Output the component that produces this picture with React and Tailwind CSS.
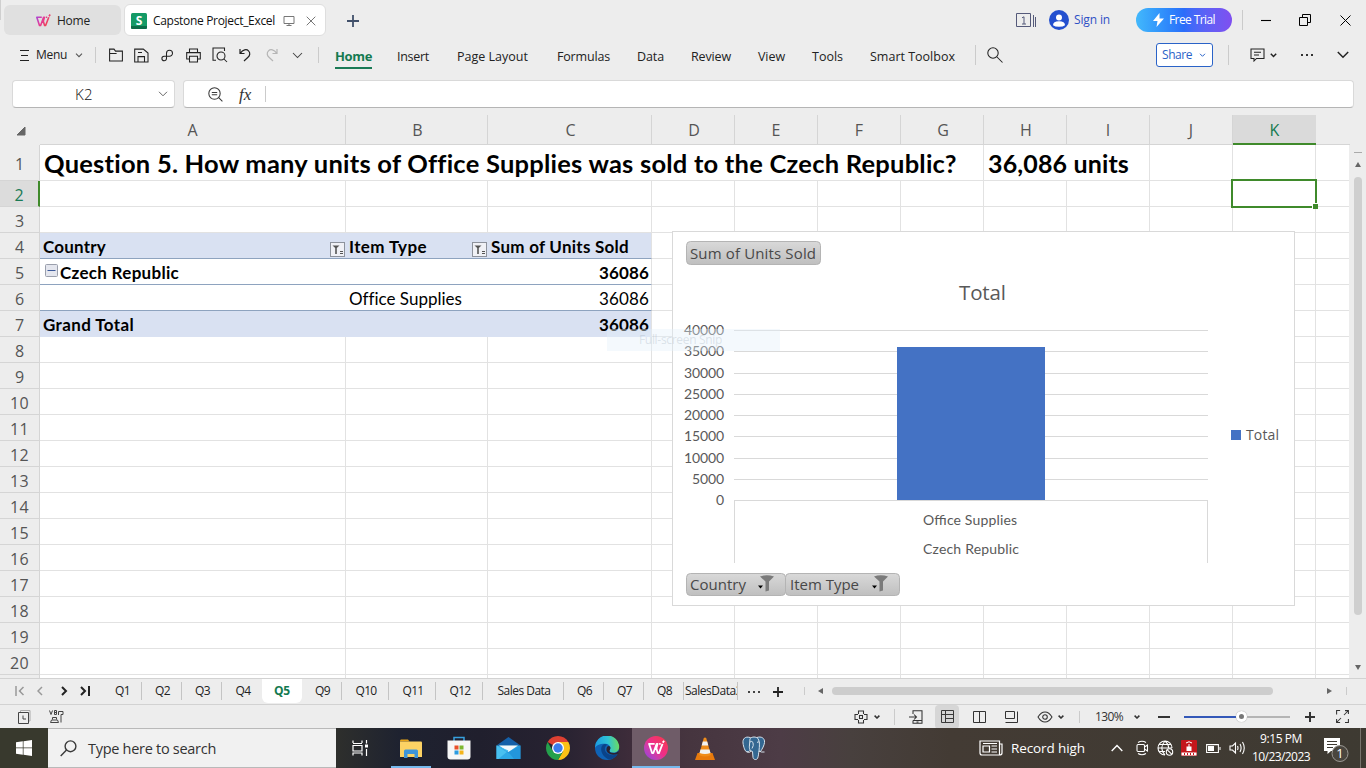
import { useLayoutEffect, useRef, useState } from "react";

/* Text that is tracked so that it takes exactly `w` pixels. */
function Fit({ w, className = "", children }) {
  const ref = useRef(null);
  const [spacing, setSpacing] = useState(0);
  useLayoutEffect(() => {
    const natural = ref.current.getBoundingClientRect().width;
    setSpacing((w - natural) / String(children).length);
  }, []);
  return (
    <span ref={ref} className={"inline-block shrink-0 whitespace-pre " + className} style={{ letterSpacing: spacing + "px" }}>
      {children}
    </span>
  );
}

function Icon({ w = 16, h = w, box, sw = 1.05, className = "text-[#3a3a3a]", children }) {
  return (
    <svg width={w} height={h} viewBox={box || `0 0 ${w} ${h}`} fill="none" stroke="currentColor" strokeWidth={sw} className={"shrink-0 " + className}>
      {children}
    </svg>
  );
}

const Sep = ({ className = "" }) => <div className={"w-px shrink-0 bg-[#cbcbcb] " + className} />;

function WpsMark({ size, gradient }) {
  return (
    <svg width={size} height={size} viewBox="0 0 16 16" fill="none" className="shrink-0">
      <defs>
        <linearGradient id="wps" x1="0" y1="0" x2="16" y2="10" gradientUnits="userSpaceOnUse">
          <stop offset="0" stopColor="#8a4df5" />
          <stop offset="0.5" stopColor="#e33a9a" />
          <stop offset="1" stopColor="#f2453a" />
        </linearGradient>
      </defs>
      <path
        d="M6.800 4.300H1.800L4.500 12.500H5.600L8.600 4.300H9.400L8.300 8.200 9.600 12.500H10.600L13.800 4.300M10.800 4.300H12.200M14 3.200 15.200 1.600"
        stroke={gradient ? "url(#wps)" : "#fff"}
        strokeWidth="1.600"
        strokeLinejoin="round"
      />
    </svg>
  );
}

function TitleBar() {
  return (
    <div className="flex h-10 shrink-0 items-center text-[12px]">
      <div className="h-5 w-px self-start bg-[#cfcfcf]" />
      <div className="ml-[3px] flex h-[30px] w-[117px] items-center rounded-md bg-[#e0e0e0] pt-px pl-[31px]">
        <WpsMark size={16} gradient />
        <Fit w={33} className="ml-[6px] text-[#222]">Home</Fit>
      </div>
      <div className="ml-[3px] flex h-[32px] w-[202px] items-center rounded-md border border-[#dedede] bg-white pt-[2px] pl-[6px]">
        <svg width="16" height="16" viewBox="0 0 16 16" className="shrink-0">
          <rect width="16" height="16" rx="1.5" fill="#149a66" />
          <path d="M0 14.5V13h16v1.5q0 1.5-1.500 1.500h-13Q0 16 0 14.500Z" fill="#0b6b48" />
          <text x="8" y="12" textAnchor="middle" fontSize="12" fontWeight="700" fill="#fff" fontFamily="Open Sans, sans-serif">S</text>
        </svg>
        <Fit w={122} className="ml-[6px] text-[#111]">Capstone Project_Excel</Fit>
        <Icon w={12} sw={1} className="ml-[8px] text-[#777]">
          <path d="M1 1.500h10v7H1zM6 8.500v2M3.500 10.500h5" />
        </Icon>
        <Icon w={10} sw={1} className="ml-[11px] text-[#777]">
          <path d="M.7.7l8.600 8.600M9.300.7.7 9.300" />
        </Icon>
      </div>
      <Icon w={12} sw={1.800} className="mt-[2px] ml-[21px] text-[#41506a]">
        <path d="M6 0v12M0 6h12" />
      </Icon>
      <Icon w={21} h={15} sw={1} className="ml-[657px] text-[#555a7a]">
        <path d="M.5.5h14v13H.5zM17.500 2v12M19.500 4v10" />
        <path d="M6 4.800l2-1V11M6 11h4" />
      </Icon>
      <svg width="20" height="20" viewBox="0 0 20 20" className="ml-[12px] shrink-0">
        <circle cx="10" cy="10" r="10" fill="#2450cf" />
        <circle cx="10" cy="7.500" r="3" fill="#fff" />
        <path d="M4 15.300q0-4 6-4t6 4q-2 1.500-6 1.500t-6-1.500Z" fill="#fff" />
      </svg>
      <Fit w={36} className="ml-[5px] text-[#2f50c5]">Sign in</Fit>
      <div className="ml-[26px] flex h-6 w-24 items-center rounded-full bg-linear-to-r from-[#43b8fb] via-[#2b6dfa] to-[#7f4ff0] pl-[17px]">
        <svg width="11" height="14" viewBox="0 0 11 14" className="shrink-0">
          <path d="M6.500 0 0 8h4.500L3.500 14 11 5.500H6.500Z" fill="#fff" />
        </svg>
        <Fit w={46} className="ml-[5px] text-white">Free Trial</Fit>
      </div>
      <Sep className="ml-[10px] h-5" />
      <Icon w={10} sw={1.100} className="ml-[18px]"><path d="M0 5.500h10" /></Icon>
      <Icon w={12} sw={1} className="ml-[28px]"><path d="M.5 3.500h8v8h-8zM3.500 3.500v-3h8v8h-3" /></Icon>
      <Icon w={11} sw={1} className="ml-[29px]"><path d="M.5.500l10 10M10.500.500l-10 10" /></Icon>
    </div>
  );
}

const menus = [
  ["Insert", 32, "ml-[25px]"],
  ["Page Layout", 71, "ml-[28px]"],
  ["Formulas", 53, "ml-[29px]"],
  ["Data", 27, "ml-[27px]"],
  ["Review", 40, "ml-[27px]"],
  ["View", 27, "ml-[27px]"],
  ["Tools", 31, "ml-[27px]"],
  ["Smart Toolbox", 85, "ml-[27px]"],
];

function MenuBar() {
  return (
    <div className="flex h-[30px] shrink-0 items-center text-[12px] text-[#222]">
      <Icon w={9} h={12} sw={1} className="ml-[20px]"><path d="M0 1.500h9M1 6.500h7M0 11.500h9" /></Icon>
      <Fit w={31} className="ml-[7px]">Menu</Fit>
      <Icon w={8} h={5} className="ml-[8px] text-[#555]"><path d="M1 .700l3 3 3-3" /></Icon>
      <Sep className="ml-[12px] h-4" />
      <Icon w={14} className="ml-[13px]"><path d="M.6 12.900V1.100h4.400l1.500 2h6.900v9.800zM.6 5.500h7" /></Icon>
      <Icon w={15} className="ml-[11px]"><path d="M4 13.900H.700V1.100h8.600l4.700 4v8.800H10.500M4 13.900V8.600h6.500v5.300H4M4 4.500h4" /></Icon>
      <Icon w={13} className="ml-[12px]"><path d="M5.500 4.200a3 3 0 1 1 3 3H3.200a2.300 2.300 0 1 0 2.300 2.300z" /></Icon>
      <Icon w={15} className="ml-[12px]"><path d="M3.500 4.500V1h8v3.500M3.500 11H.700V4.600h13.600V11h-2.800M3.500 8.300h8v5.600h-8z" /></Icon>
      <Icon w={16} className="ml-[11px]"><path d="M4 13.300H1V1h11.500v3" /><circle cx="9" cy="9" r="4" /><path d="M12 12l3 3" /></Icon>
      <Icon w={12} h={14} sw={1.200} className="ml-[11px]"><path d="M1 1v4.500h4.500M1.200 5.300C4 1.500 7.500.800 9.500 2.800s1.500 4.700-.5 6.500L5 13" /></Icon>
      <Icon w={12} h={14} sw={1.200} className="ml-[15px] text-[#b5b5b5]"><path d="M11 1v4.500H6.500M10.800 5.300C8 1.500 4.500.800 2.500 2.800S1 7.500 3 9.300L7 13" /></Icon>
      <Icon w={11} h={7} className="ml-[14px] text-[#444]"><path d="M1 1l4.500 4.500L10 1" /></Icon>
      <Sep className="ml-[15px] h-4" />
      <div className="mt-[3px] ml-[16px] flex h-6 flex-col border-b-2 border-[#1a7a55] font-bold text-[#147a50]">
        <Fit w={37} className="text-[13px] leading-[22px]">Home</Fit>
      </div>
      {menus.map(([t, w, m]) => (
        <Fit key={t} w={w} className={"mt-[4px] text-[12.500px] " + m}>{t}</Fit>
      ))}
      <Sep className="ml-[20px] h-5" />
      <Icon w={16} className="ml-[11px]"><circle cx="6" cy="6" r="5.200" /><path d="M10 10l5.500 5.500" /></Icon>
      <div className="ml-[153px] flex h-6 w-[57px] items-center rounded-[3px] border border-[#2a63c8] bg-white pl-[5px] text-[#2a63c8]">
        <Fit w={30}>Share</Fit>
        <Icon w={7} h={5} sw={1} className="ml-[7px]"><path d="M1 .800l2.500 2.500L6 .800" /></Icon>
      </div>
      <Sep className="ml-[15px] h-5" />
      <Icon w={15} h={14} className="ml-[21px]"><path d="M1 1h13v9.500H6.500L4 13V10.500H1zM4 4.200h7M4 7h5" /></Icon>
      <Icon w={7} h={5} sw={1.500} className="ml-[5px]"><path d="M.800.800l2.700 2.700L6.200.800" /></Icon>
      <svg width="12" height="2" className="ml-[24px] shrink-0 fill-[#333]"><rect width="2" height="2" /><rect x="5" width="2" height="2" /><rect x="10" width="2" height="2" /></svg>
      <Icon w={12} h={8} sw={1.500} className="ml-[24px]"><path d="M.800 1l5.200 5.200L11.200 1" /></Icon>
    </div>
  );
}

function FormulaBar() {
  const field = "flex h-[28px] items-center rounded-[4px] border border-[#d9d9d9] border-b-[#b5b5b5] bg-white";
  return (
    <div className="mt-[10px] flex h-[28px] shrink-0 pl-3">
      <div className={field + " w-[163px] pl-[62px]"}>
        <Fit w={18} className="text-[15px] font-light text-[#111]">K2</Fit>
        <Icon w={10} h={6} sw={1} className="ml-[65px] text-[#666]"><path d="M1 .800l4 4 4-4" /></Icon>
      </div>
      <div className={field + " ml-[8px] w-[1171px] pl-[24px]"}>
        <Icon w={15}><circle cx="6.500" cy="6.500" r="5.700" /><path d="M10.700 10.700l3.700 3.700M3.800 5.400h5.400M3.800 7.800h5.400" /></Icon>
        <span className="ml-[16px] w-[14px] font-['Liberation_Serif',serif] text-[17px] leading-none text-[#333] italic">fx</span>
        <Sep className="ml-[12px] h-4" />
      </div>
    </div>
  );
}

const columns = [
  ["A", "w-[306px]"], ["B", "w-[142px]"], ["C", "w-[164px]"], ["D", "w-[83px]"], ["E", "w-[83px]"], ["F", "w-[83px]"],
  ["G", "w-[83px]"], ["H", "w-[83px]"], ["I", "w-[83px]"], ["J", "w-[83px]"], ["K", "w-[83px]"], ["", "w-[34px]"],
];

function FilterButton() {
  return (
    <svg width="15" height="15" viewBox="0 0 15 15" className="mt-[8px] mr-px shrink-0">
      <rect x=".5" y=".5" width="14" height="14" fill="#f0f1f6" stroke="#8d929c" />
      <path d="M2.500 3.500h7L6.800 6V12H5.200V6z" fill="#555" />
      <path d="M10 9.500h3M10 11.500h3" stroke="#555" />
    </svg>
  );
}

const cellText = {
  A4: <><Fit w={63} className="mt-[2px] ml-[3px] font-bold">Country</Fit><span className="grow" /><FilterButton /></>,
  B4: <><Fit w={78} className="mt-[2px] ml-[3px] font-bold">Item Type</Fit><span className="grow" /><FilterButton /></>,
  C4: <Fit w={138} className="mt-[2px] ml-[3px] font-bold">Sum of Units Sold</Fit>,
  A5: (
    <>
      <svg width="13" height="13" viewBox="0 0 13 13" className="-mt-[2px] ml-[5px] shrink-0">
        <rect x=".5" y=".5" width="12" height="12" rx="1" fill="#e4e6ee" stroke="#9a9fac" />
        <path d="M2.500 6.500h8" stroke="#3c5a9a" />
      </svg>
      <Fit w={119} className="mt-[2px] ml-[2px] font-bold">Czech Republic</Fit>
    </>
  ),
  C5: <Fit w={50} className="mt-[2px] ml-[111px] font-bold">36086</Fit>,
  B6: <Fit w={112} className="mt-[2px] ml-[3px]">Office Supplies</Fit>,
  C6: <Fit w={50} className="mt-[2px] ml-[111px]">36086</Fit>,
  A7: <Fit w={91} className="mt-[2px] ml-[3px] font-bold">Grand Total</Fit>,
  C7: <Fit w={50} className="mt-[2px] ml-[111px] font-bold">36086</Fit>,
  A1: <Fit w={912} className="mt-[2px] ml-[4px] text-[25.500px] font-bold">Question 5. How many units of Office Supplies was sold to the Czech Republic?</Fit>,
  H1: <Fit w={141} className="mt-[2px] ml-[4px] text-[25px] font-bold">36,086 units</Fit>,
};

function cellClass(col, row) {
  const pivot = row >= 4 && row <= 7 && "ABC".includes(col) && col !== "";
  if (pivot) {
    const fill = row === 4 || row === 7 ? "bg-[#d9e1f2] " : "";
    const right = col === "C" ? "border-r border-r-[#e2e2e2] " : "";
    return fill + right + (row === 7 ? "border-b border-b-[#d9e1f2]" : "border-b border-b-[#8ea3bf]");
  }
  const spill = row === 1 && "ABCDEFH".includes(col);
  if (col === "") return "border-b border-[#e2e2e2]";
  return spill ? "border-b border-[#e2e2e2]" : "border-r border-b border-[#e2e2e2]";
}

function Sheet() {
  const rows = Array.from({ length: 20 }, (_, i) => i + 1);
  return (
    <div className="relative h-[533px] w-[1349px] shrink-0 overflow-hidden bg-white font-[Lato,sans-serif] text-[17px] leading-none text-black">
      {rows.map((r) => (
        <div key={r} className={"flex " + (r === 1 ? "h-[36px]" : "h-[26px]")}>
          <div
            className={
              "flex w-10 shrink-0 items-center justify-center border-b pt-[2px] font-['Open_Sans',sans-serif] text-[16px] " +
              (r === 2
                ? "border-r-2 border-b-[#d5d5d5] border-r-[#3f8a2b] bg-[#dcdcdc] text-[#1a7a55]"
                : "border-r border-b-[#d5d5d5] border-r-[#d5d5d5] bg-[#ededed] text-[#555]")
            }
          >
            <Fit w={r > 9 ? 19 : 9}>{String(r)}</Fit>
          </div>
          {columns.map(([c, w]) => (
            <div key={c} className={"flex shrink-0 items-center " + w + " " + cellClass(c, r)}>
              {cellText[c + r]}
            </div>
          ))}
        </div>
      ))}
      <div className="flex h-[3px]">
        <div className="w-10 shrink-0 border-r border-[#d5d5d5] bg-[#ededed]" />
        {columns.map(([c, w]) => (
          <div key={c} className={"shrink-0 " + w + (c ? " border-r border-[#e2e2e2]" : "")} />
        ))}
      </div>

      <div className="absolute top-[34px] left-[1231px] h-[29px] w-[86px] border-2 border-[#3f8a2b]">
        <div className="absolute -right-[3px] -bottom-[3px] size-[6px] border-t border-l border-white bg-[#3f8a2b]" />
      </div>
      <Chart />
      <div className="absolute top-[184px] left-[607px] flex h-[22px] w-[173px] items-center bg-[#e3f1fb]/40 pl-[32px] font-['Open_Sans',sans-serif] text-[12px] text-[#9aaab8]/30">
        <Fit w={83}>Full-screen Snip</Fit>
      </div>
    </div>
  );
}

const ticks = [40000, 35000, 30000, 25000, 20000, 15000, 10000, 5000, 0];
const tickY = [99, 120, 142, 163, 184, 205, 227, 248, 269];

function Funnel({ x }) {
  return (
    <g transform={`translate(${x} 344)`}>
      <path d="M2 1.500Q8.500-1 16 1.500L11 6.500V15.500L7.500 16.500V6.500Z" fill="#7b7b7b" />
      <path d="M0 10.500h5L2.500 13.500z" fill="#000" />
    </g>
  );
}

function Chart() {
  return (
    <svg width="623" height="375" viewBox="0 0 623 375" className="absolute top-[86px] left-[672px] font-[Lato,sans-serif]">
      <defs>
        <linearGradient id="btn" x1="0" y1="0" x2="0" y2="1">
          <stop offset="0" stopColor="#d9d9d9" />
          <stop offset="1" stopColor="#bfbfbf" />
        </linearGradient>
      </defs>
      <rect x=".5" y=".5" width="622" height="374" fill="#fff" stroke="#d9d9d9" />
      <g fill="url(#btn)" stroke="#b4b4b4">
        <rect x="14.500" y="10.500" width="134" height="23" rx="4" />
        <rect x="14.500" y="342.500" width="99" height="22" rx="4" />
        <rect x="113.500" y="342.500" width="114" height="22" rx="4" />
      </g>
      <g fill="#484848" fontSize="15" fontFamily="Open Sans, sans-serif">
        <text x="18" y="28" textLength="126">Sum of Units Sold</text>
        <text x="18" y="359" textLength="56">Country</text>
        <text x="118" y="359" textLength="69">Item Type</text>
      </g>
      <Funnel x={86} />
      <Funnel x={200} />
      <text x="287" y="69" fontSize="20.500" textLength="47" fill="#595959" fontFamily="Open Sans, sans-serif">Total</text>
      {tickY.map((y) => (
        <rect key={y} x="62" y={y} width="474" height="1" fill="#d9d9d9" />
      ))}
      <path d="M62.500 269v63M535.500 269v63" stroke="#d9d9d9" />
      <rect x="225" y="116" width="148" height="153" fill="#4472c4" />
      <g fill="#595959" fontSize="14" textAnchor="end">
        {ticks.map((t, i) => (
          <text key={t} x="52" y={tickY[i] + 5} textLength={String(t).length * 8}>{t}</text>
        ))}
      </g>
      <g fill="#595959" fontSize="14">
        <text x="251" y="294" textLength="94">Office Supplies</text>
        <text x="251" y="323" textLength="96">Czech Republic</text>
      </g>
      <rect x="559" y="199" width="10" height="10" fill="#4472c4" />
      <text x="574" y="209" fontSize="14" textLength="33" fill="#595959" fontFamily="Open Sans, sans-serif">Total</text>
    </svg>
  );
}

function ColumnHeader() {
  return (
    <div className="mt-[7px] flex h-[30px] shrink-0 text-[16px] text-[#555]">
      <div className="flex w-10 shrink-0 items-center pt-[2px] pl-[16px]">
        <svg width="11" height="10" viewBox="0 0 11 10"><path d="M1 9 9 1v8z" fill="#666" stroke="#666" strokeLinejoin="round" /></svg>
      </div>
      {columns.map(([c, w]) => (
        <div
          key={c}
          className={
            "flex shrink-0 items-center justify-center " + w + " " +
            (c === "K"
              ? "border-b-2 border-[#3f8a2b] bg-[#dadada] pt-px text-[#147a50]"
              : "border-b border-[#d5d5d5] " + (c ? "border-r " : "") + ("BCDGH".includes(c) ? "pl-[2px]" : ""))
          }
        >
          {c}
        </div>
      ))}
    </div>
  );
}

function VerticalScroll() {
  return (
    <div className="flex w-[17px] flex-col items-center bg-[#ededed]">
      <div className="mt-[7px] h-px w-2 bg-[#aaa]" />
      <svg width="6" height="5" className="mt-[9px]"><path d="M0 5h6L3 0z" fill="#666" /></svg>
      <div className="mt-[10px] h-[438px] w-[8px] rounded-full bg-[#cfcfcf]" />
      <svg width="6" height="5" className="mt-[50px]"><path d="M0 0h6L3 5z" fill="#666" /></svg>
    </div>
  );
}

const tabs = [
  ["Q1", 15, "w-10"], ["Q2", 15, "w-10"], ["Q3", 15, "w-10"], ["Q4", 15, "w-10"], ["Q5", 16, "w-10"], ["Q9", 15, "w-10"],
  ["Q10", 21, "w-[47px]"], ["Q11", 21, "w-[47px]"], ["Q12", 21, "w-[47px]"], ["Sales Data", 53, "w-[81px]"],
  ["Q6", 15, "w-10"], ["Q7", 15, "w-10"], ["Q8", 15, "w-10"],
];

function SheetTabs() {
  return (
    <div className="flex h-[26px] shrink-0 items-center border-t border-[#d2d2d2] pb-px text-[12px] text-[#222]">
      <Icon w={10} sw={1.500} className="ml-[15px] text-[#999]"><path d="M1 0v10M8.500 1l-4 4 4 4M4 5h2" /></Icon>
      <Icon w={6} h={10} sw={1.500} className="ml-[12px] text-[#999]"><path d="M5 1 1 5l4 4" /></Icon>
      <Icon w={7} h={10} sw={2} className="ml-[18px]"><path d="M1 1l4 4-4 4" /></Icon>
      <Icon w={10} sw={2} className="ml-[12px]"><path d="M1 1l4 4-4 4M9 0v10" /></Icon>
      <div className="ml-[12px] flex h-full items-center">
        {tabs.map(([t, w, c]) =>
          t === "Q5" ? (
            <div key={t} className={"flex h-[24px] items-center justify-center self-start rounded-b-md bg-white font-bold text-[#147a50] " + c}>
              <Fit w={w}>{t}</Fit>
            </div>
          ) : (
            <div key={t} className={"flex h-[18px] items-center justify-center pb-px pl-[2px] " + c + (t === "Q4" ? "" : " border-r border-[#c4c4c4]")}>
              <Fit w={w}>{t}</Fit>
            </div>
          ),
        )}
        <div className="flex h-[18px] w-[54px] items-center overflow-hidden border-r border-[#c4c4c4] pb-px pl-[1px]">
          <Fit w={57}>SalesData2</Fit>
        </div>
      </div>
      <svg width="13" height="2" className="mt-[2px] ml-[10px] shrink-0 fill-[#444]"><rect width="2" height="2" /><rect x="5" width="2" height="2" /><rect x="10" width="2" height="2" /></svg>
      <Icon w={10} sw={1.800} className="mt-[2px] ml-[12px]"><path d="M5 0v10M0 5h10" /></Icon>
      <Sep className="ml-[21px] h-2 bg-[#999]" />
      <svg width="5" height="6" className="ml-[13px] shrink-0"><path d="M5 0v6L0 3z" fill="#666" /></svg>
      <div className="ml-[9px] h-[8px] w-[441px] shrink-0 rounded-full bg-[#cdcdcd]" />
      <svg width="5" height="6" className="ml-[54px] shrink-0"><path d="M0 0v6l5-3z" fill="#666" /></svg>
      <Sep className="ml-[14px] h-2 bg-[#999]" />
    </div>
  );
}

function StatusBar() {
  return (
    <div className="flex h-[24px] shrink-0 items-center border-t border-[#d2d2d2] text-[12px] text-[#333]">
      <svg width="14" height="14" viewBox="0 0 14 14" fill="none" className="ml-[17px] shrink-0">
        <path d="M3.500 2V.500h9.500v10.500h-2" stroke="#aaa" />
        <path d="M1.500 2.500h10v11h-10zM6 5.500V9h3" stroke="#444" />
      </svg>
      <svg width="15" height="14" viewBox="0 0 15 14" fill="none" stroke="#444" className="ml-[18px] shrink-0">
        <path d="M.500.500l1.500 4L3.500.500M5.500.500v4h2v-4zM5.500 2.500h2M9.500 5V1.500h4.500v3h-2v8M3.500 9.500V7.500h4v2M1.500 12.500l1-2.500h6l1 2.500z" />
      </svg>
      <Icon w={14} className="ml-[790px]"><path d="M4.500 4V1h5v3M4.500 10v3h5v-3M4 4.500H1v5h3M10 4.500h3v5h-3" /><rect x="5.500" y="5.500" width="3" height="3" /></Icon>
      <Icon w={6} h={4} sw={1.500} className="ml-[6px]"><path d="M.600.600l2.400 2.400L5.400.600" /></Icon>
      <Sep className="ml-[14px] h-4" />
      <Icon w={14} className="ml-[14px]"><path d="M4 4V.700h9v12.600H4V10.500M4 10.500h9M0 7h7.500M5 4.500L7.500 7 5 9.500M7.500 12h2" /></Icon>
      <div className="ml-[12px] flex h-[24px] w-6 items-center justify-center rounded-sm bg-[#d6d6d6]">
        <Icon w={13} sw={1}><path d="M.5.500h12v12h-12zM.5 4.500h12M4.500.500v12M4.500 8.500h8" /></Icon>
      </div>
      <Icon w={13} h={12} sw={1} className="ml-[14px]"><path d="M.5.500h12v11h-12zM6.500.500v11" /></Icon>
      <Icon w={13} h={12} sw={1} className="ml-[19px]"><path d="M.5.500h9v7h-9zM12.500.500v11h-12" /></Icon>
      <Icon w={16} h={12} className="ml-[19px]"><path d="M1 6q3-5 7-5t7 5q-3 5-7 5T1 6z" /><circle cx="8" cy="6" r="2.300" /></Icon>
      <Icon w={6} h={4} sw={1.500} className="ml-[5px]"><path d="M.600.600l2.400 2.400L5.400.600" /></Icon>
      <Sep className="ml-[15px] h-3" />
      <Fit w={28} className="ml-[15px]">130%</Fit>
      <Icon w={6} h={4} sw={1.500} className="ml-[11px]"><path d="M.600.600l2.400 2.400L5.400.600" /></Icon>
      <div className="ml-[18px] h-[2px] w-3 bg-[#333]" />
      <div className="ml-[14px] flex items-center">
        <div className="h-[2px] w-[52px] bg-[#3358b8]" />
        <div className="size-[11px] rounded-full border-[3px] border-white bg-[#777] shadow-[0_0_1px_#888]" />
        <div className="h-[2px] w-[43px] bg-[#b5b5b5]" />
      </div>
      <Icon w={10} sw={2} className="ml-[15px]"><path d="M5 0v10M0 5h10" /></Icon>
      <Icon w={13} className="ml-[21px]"><path d="M.600 4.500v-4h3.500M9 .600h3.400V4M12.400 9v3.400H9M4.100 12.400H.600V9M8 5l4-4M5 8l-4 4" /></Icon>
    </div>
  );
}

function Taskbar() {
  return (
    <div className="flex h-10 shrink-0 items-center bg-[linear-gradient(90deg,#38392d_0px,#38392d_48px,#2e2f2c_336px,#1e2230_400px,#201f2d_480px,#272231_560px,#3d2c3a_630px,#46353f_690px,#4d3c46_780px,#48403e_850px,#433b34_950px,#3e3a32_1366px)] text-white">
      <svg width="16" height="16" viewBox="0 0 16 16" className="ml-4 shrink-0 fill-white">
        <path d="M0 2.300 6.800 1.300V7.600H0zM7.500 1.200 16 0V7.600H7.500zM0 8.300h6.800v6.400L0 13.700zM7.500 8.300H16V16L7.500 14.800z" />
      </svg>
      <div className="ml-4 flex h-10 w-[288px] items-center border-y border-[#b9b9b9] bg-[#f1f1f1] pl-[12px] text-[14.500px] text-[#333]">
        <Icon w={17} sw={1.400}><circle cx="10.500" cy="6.300" r="5.400" /><path d="M6.500 10 .700 16" /></Icon>
        <Fit w={128} className="mt-px ml-[11px]">Type here to search</Fit>
      </div>
      <Icon w={17} h={16} sw={1.200} className="ml-[16px] text-white">
        <path d="M1 3V.500M1 3.500h9M10 3V.500M1 5.500h9v5.500H1zM1 15.500V13h9v2.500M14.500 0v3.500M14.500 9v7" />
        <path d="M14.500 4.500v3" strokeWidth="3" />
      </Icon>
      <div className="ml-[22px] flex h-10 w-10 flex-col items-center justify-end">
        <svg width="22" height="19" viewBox="0 0 22 19" className="mb-[8px]">
          <path d="M0 2q0-1.500 1-1.500h7l1.500 2H0z" fill="#e8a317" />
          <path d="M0 2.500h21q1 0 1 1V18H0z" fill="#fcd264" />
          <path d="M4 19v-7q0-1.500 1.500-1.500h11Q18 10.500 18 12v7h-3.500v-4h-7v4z" fill="#3f95d8" />
        </svg>
        <div className="h-[2px] w-full bg-[#76b9ed]" />
      </div>
      <svg width="24" height="24" viewBox="0 0 24 24" className="ml-[16px] shrink-0">
        <path d="M7 6V1.500h10V6" fill="none" stroke="#37a0de" strokeWidth="1.500" />
        <path d="M.500 4.500h23v16q0 3-3 3h-17q-3 0-3-3z" fill="#f6f6f6" />
        <path d="M7.500 9.500h4v4h-4z" fill="#e8502a" /><path d="M12.500 9.500h4v4h-4z" fill="#7db72f" />
        <path d="M7.500 14.500h4v4h-4z" fill="#2b9be0" /><path d="M12.500 14.500h4v4h-4z" fill="#f5b51b" />
      </svg>
      <svg width="25" height="23" viewBox="0 0 25 23" className="ml-[25px] shrink-0">
        <path d="M.500 8.500 12.500 0l12 8.500z" fill="#1560a8" />
        <path d="M.500 8.500h24V22H.500z" fill="#2ea8e6" />
        <path d="M3 8.500h19L12.500 15z" fill="#f3f8fb" />
        <path d="M.500 8.500v13.500h2L12.500 13.500z" fill="#49c0f0" />
        <path d="M.500 8.500 14 17l4 5H24.500V8.500L12.500 15z" fill="#1c86d4" opacity=".55" />
      </svg>
      <svg width="24" height="24" viewBox="0 0 24 24" className="ml-[25px] shrink-0">
        <path d="M12 12 1.610 6A12 12 0 0 1 22.390 6z" fill="#dd4032" />
        <path d="M12 12V6h10.390A12 12 0 0 1 12 24l5.200-9z" fill="#fbc116" />
        <path d="M12 24A12 12 0 0 1 1.610 6L6.800 15l5.200 3 5.200-3z" fill="#24a04c" />
        <circle cx="12" cy="12" r="6" fill="#fff" /><circle cx="12" cy="12" r="4.700" fill="#3a7ced" />
      </svg>
      <svg width="25" height="24" viewBox="0 0 25 24" className="ml-[25px] shrink-0">
        <defs>
          <linearGradient id="edgeTop" x1="0" y1="10" x2="24" y2="8" gradientUnits="userSpaceOnUse"><stop stopColor="#1b9be2" /><stop offset=".55" stopColor="#2fc2d6" /><stop offset="1" stopColor="#6adb63" /></linearGradient>
        </defs>
        <circle cx="12" cy="12" r="12" fill="#0f62b5" />
        <path d="M0 12A12 12 0 0 1 24.200 11c0 3.500-2.500 5.500-6 5.500-2.500 0-4-.8-4-1.800 0-.8 1-1.200 1-3 0-2-2-4-5-4C5 7.500.500 9.500 0 12z" fill="url(#edgeTop)" />
        <path d="M10 8C4 9 5 20 14 23.500 19 23 22 20 22.500 18 19 20 13 19.500 10.500 15.500 9 12.500 10.500 9.500 12.500 8.800z" fill="#0a4389" />
        <path d="M14.500 14.700c0 1.300 1.500 2.300 4 2.300 2 0 4-.500 5-2.300v2.800q-5 2-8 .800c-3-1-4.500-3-4-5.500.200-1.700 1-2.800 2.500-2.800 1.200.500 1.600 1.500 1.500 2.200z" fill="#2a2231" />
      </svg>
      <div className="ml-[12px] flex h-10 w-12 flex-col items-center justify-end bg-[#6f5c68]">
        <div className="mb-[6px] flex size-6 items-center justify-center rounded-full bg-linear-to-tr from-[#8a35e8] via-[#ee2d8a] to-[#f8383c]">
          <WpsMark size={18} />
        </div>
        <div className="h-[2px] w-full bg-[#76b9ed]" />
      </div>
      <svg width="20" height="23" viewBox="0 0 20 23" className="ml-[15px] shrink-0">
        <path d="M2.500 16h15l2.500 7H0z" fill="#e87a0c" />
        <path d="M8.800 1q1.200-1 2.400 0L16 18q-6 3-12 0z" fill="#f08d1a" />
        <path d="M7.800 4.500h4.400L13.300 8.500H6.700zM5.500 12.500h9L15.500 16q-5.500 2-11 0z" fill="#f2f2f2" />
      </svg>
      <svg width="24" height="25" viewBox="0 0 24 25" className="ml-[27px] shrink-0" fill="#336791" stroke="#d6e2ec" strokeWidth="1" strokeLinejoin="round">
        <path d="M8 1.500C3 0 .500 3 1 7c.500 4 2 8.500 4 9s2.500-1.500 3.500-2.500L8.800 2z" />
        <path d="M15 1.500c4-1.500 8 .5 7.500 5-.300 3-2 6-4 9l-3-1z" />
        <path d="M8 2.500C10 .500 14 .500 16 2.500c2 3 1.500 8 1 12-.500 3-.500 6-1.500 8-1 1.500-4 1.500-4.500-1l-.500-6C7.500 15 7 12 7.500 9z" />
        <path d="M17 15q2 1.500 5.500 1M4.500 15.500q3 2 5-.5M8 6q2-1.500 3 .5 1 3-1 6M15 6.500q1.500-1.500 2.500 0" fill="none" />
      </svg>
      <Icon w={24} h={16} sw={1.200} className="ml-[213px] text-white">
        <path d="M1 1h19.500v14H3q-2 0-2-2zM20.500 4H23v9q0 2-2.500 2M4 6h6.500v6H4zM12.500 6H18M12.500 9H18M12.500 12H18M4 3.500h14" />
      </Icon>
      <Fit w={74} className="ml-[8px] text-[13.500px]">Record high</Fit>
      <Icon w={12} h={8} sw={1.400} className="ml-[26px] text-white"><path d="M.700 7 6 1.500 11.300 7" /></Icon>
      <Icon w={13} h={16} className="ml-[13px] text-white"><rect x="1" y="4.500" width="7.500" height="7" rx="1" /><path d="M8.500 7 11.500 5v6L8.500 9M2 2.500Q6 0 10 2.500M2 13.500Q6 16 10 13.500" /></Icon>
      <Icon w={17} h={16} sw={1.100} className="ml-[8px] text-white"><path d="M8 15A7 7 0 1 1 15 8M1 8h14M2 4.500h12M2 11.500h6M8 1Q1.500 8 8 15M8 1q4 4 3.500 7" /><circle cx="12.500" cy="12" r="3.200" /><path d="M10.300 9.800l4.400 4.400" /></Icon>
      <svg width="16" height="16" viewBox="0 0 16 16" className="ml-[7px] shrink-0">
        <rect width="16" height="16" rx="1" fill="#c4161c" />
        <path d="M5.500 6.500h5V11h-5zM7.500 4h1v3h-1z" fill="#fff" /><path d="M5 3q3-2.500 6 0" fill="none" stroke="#fff" />
        <path d="M.500 12.500h15V15.500H.500z" fill="#fff" /><path d="M3.500 13v2M6.500 13v2M9.500 13v2M12.500 13v2" stroke="#c4161c" />
      </svg>
      <Icon w={15} h={9} className="ml-[9px] text-white"><path d="M.600.600h11.800v7.800H.600zM14 3v3" /><path d="M2 2h6v5H2z" fill="#fff" stroke="none" /></Icon>
      <Icon w={17} h={14} sw={1.100} className="ml-[8px] text-white"><path d="M1 5h2.500l3-3v10l-3-3H1zM8.500 5q1 2 0 4M11 3q2.200 4 0 8M13.500 1q3.500 6 0 12" /></Icon>
      <div className="ml-[5px] flex w-[60px] flex-col items-center text-[12px] leading-[18px]">
        <Fit w={42}>9:15 PM</Fit>
        <Fit w={58}>10/23/2023</Fit>
      </div>
      <svg width="25" height="26" viewBox="0 0 25 26" className="mt-[4px] ml-[13px] shrink-0">
        <path d="M0 1h16v13H7l-3.500 3V14H0z" fill="#fff" />
        <path d="M3 4.500h10M3 7.500h10M3 10.500h6" stroke="#3e3a32" strokeWidth="1.200" />
        <circle cx="16" cy="16.500" r="8" fill="#4a463f" stroke="#9b9893" />
        <text x="16" y="21" textAnchor="middle" fontSize="13" fill="#fff" fontFamily="Open Sans, sans-serif">1</text>
      </svg>
      <div className="ml-[11px] h-10 w-px bg-[#77736c]" />
    </div>
  );
}

export default function App() {
  return (
    <div className="flex h-[768px] w-[1366px] flex-col overflow-hidden bg-[#ededed] font-['Open_Sans',sans-serif]">
      <TitleBar />
      <MenuBar />
      <FormulaBar />
      <ColumnHeader />
      <div className="flex h-[533px] shrink-0">
        <Sheet />
        <VerticalScroll />
      </div>
      <SheetTabs />
      <StatusBar />
      <Taskbar />
    </div>
  );
}
